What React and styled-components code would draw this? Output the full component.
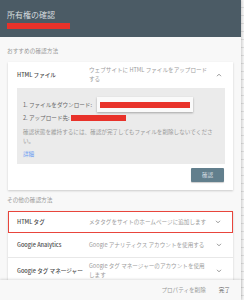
import React from 'react'
import styled, { createGlobalStyle } from 'styled-components'

const Global = createGlobalStyle`
  html, body {
    margin: 0;
    padding: 0;
  }
  body {
    width: 244px;
    height: 300px;
    overflow: hidden;
    background-color: #f3f3f3;
    background-image: repeating-linear-gradient(
      to bottom,
      transparent 0,
      transparent 7px,
      #dcdcdc 7px,
      #dcdcdc 8px
    );
    font-family: 'Noto Sans CJK JP', 'Noto Sans', Roboto, sans-serif;
  }
`

const Dialog = styled.div`
  width: 241px;
  height: 300px;
  display: flex;
  flex-direction: column;
  background: #f8f8f8;
  box-shadow: 1px 0 2px rgba(0, 0, 0, 0.15);
`

const Header = styled.div`
  height: 37px;
  flex-shrink: 0;
  box-sizing: border-box;
  padding: 10px 7px 0 7px;
  background: #4b5b65;
  display: flex;
  flex-direction: column;
  gap: 3px;
  h1 {
    margin: 0;
    font-size: 8px;
    line-height: 10px;
    font-weight: 400;
    color: #d4dadd;
  }
`

const Redact = styled.div`
  width: ${(p) => p.w}px;
  height: ${(p) => p.h || 6}px;
  background: #e8322a;
`

const Body = styled.div`
  flex: 1;
  overflow: hidden;
  padding: 0 8px;
`

const SectionLabel = styled.div`
  font-size: 5.7px;
  line-height: 8px;
  color: #9a9a9a;
  padding: ${(p) => p.pad};
  margin-left: -1px;
`

const Card = styled.div`
  width: 225px;
  background: #fff;
  box-shadow: 0 1px 2px rgba(0, 0, 0, 0.18);
`

const Row = styled.div`
  display: flex;
  align-items: center;
  box-sizing: border-box;
  height: ${(p) => p.h}px;
  padding: 0 11px 0 9px;
  border: ${(p) => (p.marked ? '1px solid #e8453c' : 'none')};
  border-bottom: ${(p) =>
    p.marked ? '1px solid #e8453c' : p.last ? 'none' : '1px solid #e8e8e8'};
  padding-left: ${(p) => (p.marked ? 8 : 9)}px;
`

const RowTitle = styled.div`
  width: 72px;
  flex-shrink: 0;
  font-size: 5.6px;
  font-weight: 500;
  color: #4a4a4a;
  white-space: nowrap;
`

const RowDesc = styled.div`
  flex: 1;
  font-size: 5.6px;
  line-height: 9px;
  color: #9c9c9c;
  padding-right: 6px;
`

const Chevron = ({ up }) => (
  <svg width="6" height="4" viewBox="0 0 6 4">
    <polyline
      points={up ? '1,3.2 3,1.2 5,3.2' : '1,0.8 3,2.8 5,0.8'}
      fill="none"
      stroke="#8a8a8a"
      strokeWidth="0.9"
    />
  </svg>
)

const Panel = styled.div`
  margin: 0 8px 0 9px;
  background: #ebebeb;
  height: 76px;
  box-sizing: border-box;
  padding: 9px 8px 0 6px;
  font-size: 5.6px;
  color: #666;
`

const Step = styled.div`
  display: flex;
  align-items: center;
  gap: ${(p) => p.gap || 2}px;
  height: ${(p) => p.h}px;
`

const FileBox = styled.div`
  width: 96px;
  height: 15px;
  box-sizing: border-box;
  background: #fafafa;
  box-shadow: 0 1px 2px rgba(0, 0, 0, 0.3);
  display: flex;
  align-items: center;
  justify-content: center;
`

const Note = styled.p`
  margin: 5px 0 0 0;
  color: #9a9a9a;
  line-height: 9px;
`

const Link = styled.a`
  display: block;
  margin-top: 4px;
  color: #6a9bf2;
  line-height: 8px;
`

const Actions = styled.div`
  height: 26px;
  display: flex;
  justify-content: flex-end;
  align-items: flex-start;
  padding: 4px 9px 0 0;
  box-sizing: border-box;
`

const Button = styled.button`
  width: 33px;
  height: 14px;
  border: none;
  border-radius: 1px;
  background: #627f8d;
  color: #d6dee2;
  font-family: inherit;
  font-size: 5.6px;
  padding: 0;
  box-shadow: 0 1px 1px rgba(0, 0, 0, 0.2);
`

const Footer = styled.div`
  height: 20px;
  flex-shrink: 0;
  background: #f8f8f8;
  box-shadow: 0 -1px 2px rgba(0, 0, 0, 0.12);
  display: flex;
  justify-content: flex-end;
  align-items: center;
  gap: 13px;
  padding-right: 11px;
  font-size: 5.6px;
  position: relative;
`

const FooterBtn = styled.span`
  color: ${(p) => (p.strong ? '#666' : '#999')};
`

export default function App() {
  return (
    <>
      <Global />
      <Dialog>
        <Header>
          <h1>所有権の確認</h1>
          <Redact w={63} />
        </Header>
        <Body>
          <SectionLabel pad="10px 0 7px 0">おすすめの確認方法</SectionLabel>
          <Card>
            <Row h={26} last>
              <RowTitle>HTML ファイル</RowTitle>
              <RowDesc>ウェブサイトに HTML ファイルをアップロードする</RowDesc>
              <Chevron up />
            </Row>
            <Panel>
              <Step h={15} gap={5}>
                <span>1. ファイルをダウンロード:</span>
                <FileBox>
                  <Redact w={90} />
                </FileBox>
              </Step>
              <Step h={11} gap={1}>
                <span>2. アップロード先:</span>
                <Redact w={55} />
              </Step>
              <Note>
                確認状態を維持するには、確認が完了してもファイルを削除しないでください。
              </Note>
              <Link>詳細</Link>
            </Panel>
            <Actions>
              <Button>確認</Button>
            </Actions>
          </Card>
          <SectionLabel pad="6px 0 7px 0">その他の確認方法</SectionLabel>
          <Card>
            <Row h={22} marked>
              <RowTitle>HTML タグ</RowTitle>
              <RowDesc>メタタグをサイトのホームページに追加します</RowDesc>
              <Chevron />
            </Row>
            <Row h={25}>
              <RowTitle>Google Analytics</RowTitle>
              <RowDesc>Google アナリティクス アカウントを使用する</RowDesc>
              <Chevron />
            </Row>
            <Row h={26} last>
              <RowTitle>Google タグ マネージャー</RowTitle>
              <RowDesc>Google タグ マネージャーのアカウントを使用します</RowDesc>
              <Chevron />
            </Row>
          </Card>
        </Body>
        <Footer>
          <FooterBtn>プロパティを削除</FooterBtn>
          <FooterBtn strong>完了</FooterBtn>
        </Footer>
      </Dialog>
    </>
  )
}
